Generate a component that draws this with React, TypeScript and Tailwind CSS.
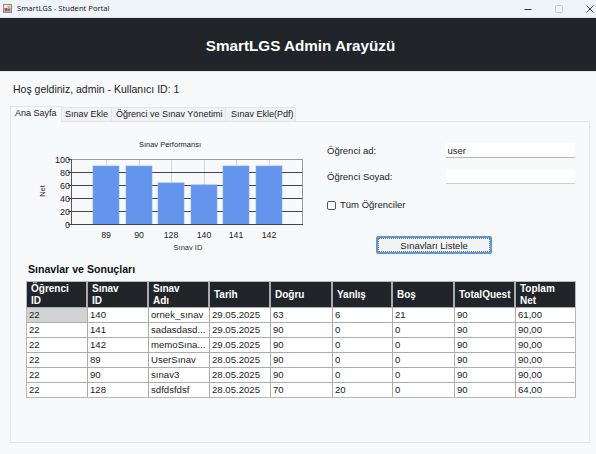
import React from 'react';

const columns = [
  ['Öğrenci', 'ID'],
  ['Sınav', 'ID'],
  ['Sınav', 'Adı'],
  ['Tarih'],
  ['Doğru'],
  ['Yanlış'],
  ['Boş'],
  ['TotalQuest'],
  ['Toplam', 'Net'],
];

const rows = [
  ['22', '140', 'ornek_sınav', '29.05.2025', '63', '6', '21', '90', '61,00'],
  ['22', '141', 'sadasdasd...', '29.05.2025', '90', '0', '0', '90', '90,00'],
  ['22', '142', 'memoSına...', '29.05.2025', '90', '0', '0', '90', '90,00'],
  ['22', '89', 'UserSınav', '28.05.2025', '90', '0', '0', '90', '90,00'],
  ['22', '90', 'sınav3', '28.05.2025', '90', '0', '0', '90', '90,00'],
  ['22', '128', 'sdfdsfdsf', '28.05.2025', '70', '20', '0', '90', '64,00'],
];

const tabs = [
  { name: 'Sınav Ekle', box: 'w-[50px] pl-[3px]' },
  { name: 'Öğrenci ve Sınav Yönetimi', box: 'w-[114px] pl-[4px]' },
  { name: 'Sınav Ekle(Pdf)', box: 'w-[70px] pl-[5px]' },
];

const bars = [
  { id: '89', x: 92, net: 90 },
  { id: '90', x: 125, net: 90 },
  { id: '128', x: 157, net: 64 },
  { id: '140', x: 190, net: 61 },
  { id: '141', x: 222, net: 90 },
  { id: '142', x: 255, net: 90 },
];

const PerformanceChart: React.FC = () => (
  <svg width="300" height="122" viewBox="10 134 300 122" className="block shrink-0" fontFamily="'Liberation Sans', sans-serif">
    <text x="169" y="147" fontSize="7.5" textAnchor="middle" fill="#222">Sınav Performansı</text>
    {/* vertical grid */}
    {bars.map((b) => (
      <line key={b.id} x1={b.x + 13.5} x2={b.x + 13.5} y1="159" y2="225" stroke="#d3d3d3" />
    ))}
    {/* horizontal grid + labels */}
    {[100, 80, 60, 40, 20, 0].map((v, i) => (
      <g key={v}>
        <line x1="70" x2="302" y1={159.5 + i * 13} y2={159.5 + i * 13} stroke={v === 100 ? '#999' : '#444'} />
        <line x1="67" x2="70" y1={159.5 + i * 13} y2={159.5 + i * 13} stroke="#444" />
        <text x="69" y={162.5 + i * 13} fontSize="9" textAnchor="end" fill="#222">{v}</text>
      </g>
    ))}
    <line x1="70.5" x2="70.5" y1="159" y2="225" stroke="#555" />
    <line x1="301.5" x2="301.5" y1="159" y2="225" stroke="#999" />
    {bars.map((b) => (
      <g key={b.id}>
        <rect x={b.x} y={224.5 - b.net * 0.65} width="26" height={b.net * 0.65} fill="#6495ED" stroke="#7da7f1" strokeWidth="0.6" />
        <text x={b.x + 13} y="238" fontSize="8.75" textAnchor="middle" fill="#222">{b.id}</text>
      </g>
    ))}
    <line x1="67" x2="302" y1="224.5" y2="224.5" stroke="#444" />
    <text x="187" y="249.5" fontSize="7.5" textAnchor="middle" fill="#333">Sınav ID</text>
    <text x="0" y="0" fontSize="7.5" textAnchor="middle" fill="#333" transform="translate(44 191) rotate(-90)">Net</text>
  </svg>
);

export default function App() {
  return (
    <div className="w-[596px] h-[454px] overflow-hidden bg-[#f8f9fa] font-['Liberation_Sans',sans-serif] text-[#1c1c1c]">
      {/* window title bar */}
      <div className="h-[18px] bg-[#eff4f9] border-b border-[#dfe3e7] flex items-center">
        <svg width="9" height="9" viewBox="0 0 9 9" className="ml-[3px] shrink-0">
          <rect x="0.5" y="0.5" width="8" height="8" fill="#e9e9ef" stroke="#8a8a9a" />
          <rect x="1.5" y="4" width="3" height="3.5" fill="#d8442f" />
          <rect x="4.5" y="1.5" width="3" height="3" fill="#f2b632" />
          <rect x="4.5" y="4.5" width="3" height="3" fill="#4a7fd0" />
        </svg>
        <span className="ml-[5px] text-[7.6px] font-['Noto_Sans',sans-serif] text-[#222]">SmartLGS - Student Portal</span>
        <div className="ml-auto flex items-center gap-[23px] pr-[2px]">
          <svg width="8" height="8" viewBox="0 0 8 8"><line x1="0.5" x2="7.5" y1="4.5" y2="4.5" stroke="#333" /></svg>
          <svg width="8" height="8" viewBox="0 0 8 8"><rect x="0.5" y="0.5" width="7" height="7" rx="1" fill="none" stroke="#c4c7ca" /></svg>
          <svg width="8" height="8" viewBox="0 0 8 8"><path d="M0.5 0.5L7.5 7.5M7.5 0.5L0.5 7.5" stroke="#333" strokeWidth="0.9" /></svg>
        </div>
      </div>

      {/* banner */}
      <div className="h-[54px] bg-[#212529] flex items-center justify-center border-b border-[#e5e7ea] pt-[3px] pl-[5px]">
        <h1 className="text-[15.25px] font-bold text-white">SmartLGS Admin Arayüzü</h1>
      </div>

      <p className="mt-[9px] ml-[13px] h-[16px] leading-[16px] text-[10.5px] text-[#222]">Hoş geldiniz, admin - Kullanıcı ID: 1</p>

      {/* tabs */}
      <div className="mt-[9px] ml-[10px] flex items-end h-[15px] text-[9px]">
        <div className="w-[52px] h-[16px] pl-[4px] pb-[2px] bg-[#f8f9fa] border border-b-0 border-[#e3e5e7] flex items-center relative z-10 -mb-px">Ana Sayfa</div>
        {tabs.map((t) => (
          <div key={t.name} className={`${t.box} h-[14px] pt-px bg-[#f1f2f4] border-t border-r border-[#e3e5e7] flex items-center whitespace-nowrap`}>{t.name}</div>
        ))}
      </div>

      {/* tab panel */}
      <div className="ml-[10px] w-[580px] h-[322px] border border-[#e3e5e7] bg-[#f8f9fa]">
        <div className="flex h-[124px] pt-[12px]">
          <PerformanceChart />
          <div className="ml-[16px] w-[250px] text-[9.5px]">
            <div className="flex items-center h-[15px] mt-[9px]">
              <label className="w-[119px] pt-[2px]">Öğrenci ad:</label>
              <div className="w-[129px] h-[15px] bg-white border-b border-[#b5b5b5] pl-[1.5px] leading-[15px]">user</div>
            </div>
            <div className="flex items-center h-[15px] mt-[11px]">
              <label className="w-[119px] pt-[2px]">Öğrenci Soyad:</label>
              <div className="w-[129px] h-[15px] bg-white border-b border-[#cfcfcf]" />
            </div>
            <div className="flex items-center h-[14px] mt-[14px]">
              <span className="w-[9px] h-[9px] border border-[#555] rounded-[2px] bg-white" />
              <span className="ml-[4px]">Tüm Öğrenciler</span>
            </div>
            <button className="block mt-[24px] ml-[49px] w-[116px] h-[18px] rounded-[2px] border-2 border-[#5b9bd5] bg-[#f3f4f5] text-[9.5px] leading-[13px] outline outline-1 outline-dotted outline-[#777] outline-offset-[-3px]">Sınavları Listele</button>
          </div>
        </div>

        <h2 className="mt-[17px] ml-[17px] h-[13px] leading-[13px] text-[10.6px] font-bold text-[#111]">Sınavlar ve Sonuçları</h2>

        {/* results grid */}
        <div className="mt-[5px] ml-[15px] w-[550px] border border-[#b5b7b9] text-[9.6px]">
          <div className="grid grid-cols-[61px_61px_61px_61px_62px_60px_62px_61px_1fr] h-[25px] bg-[#212529] text-white text-[10px] font-bold leading-[12px]">
            {columns.map((c) => (
              <div key={c.join()} className="border-r-2 border-[#a8acb0] last:border-r-0 pl-[4px] pt-px flex flex-col justify-center whitespace-nowrap">
                {c.map((line) => <span key={line}>{line}</span>)}
              </div>
            ))}
          </div>
          {rows.map((r, i) => (
            <div key={r[1]} className="grid grid-cols-[61px_61px_61px_61px_62px_60px_62px_61px_1fr] h-[15px] bg-white border-t border-[#aaacae] leading-[13px]">
              {r.map((cell, j) => (
                <div key={j} className={`border-r border-[#aaacae] last:border-r-0 pl-[2px] overflow-hidden whitespace-nowrap ${i === 0 && j === 0 ? 'bg-[#d3d3d3]' : ''}`}>{cell}</div>
              ))}
            </div>
          ))}
        </div>
      </div>
    </div>
  );
}
